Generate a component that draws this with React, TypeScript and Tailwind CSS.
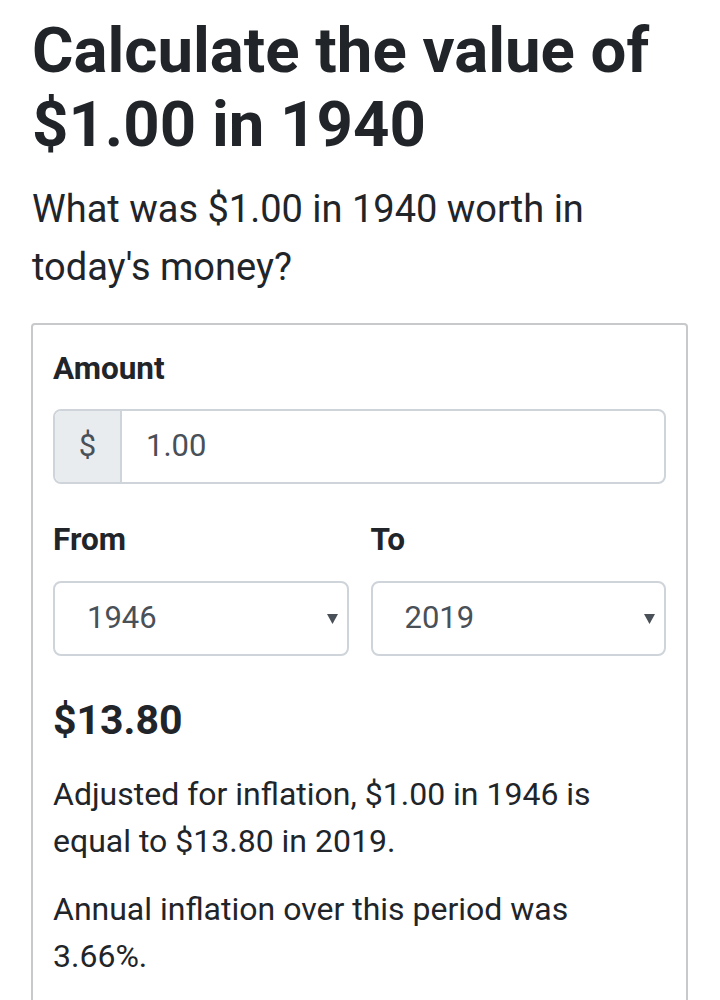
import React, { useState } from 'react';

const years = Array.from({ length: 2019 - 1913 + 1 }, (_, i) => 1913 + i);

function YearSelect({ value, onChange }: { value: number; onChange: (v: number) => void }) {
  return (
    <div className="relative flex-1">
      <select
        value={value}
        onChange={(e) => onChange(Number(e.target.value))}
        className="w-full h-[75px] appearance-none bg-white border-2 border-[#ced4da] rounded-[8px] pl-[32px] pr-10 text-[31px] text-[#495057] outline-none"
      >
        {years.map((y) => (
          <option key={y} value={y}>
            {y}
          </option>
        ))}
      </select>
      <svg
        className="pointer-events-none absolute right-[11px] top-[32px]"
        width="11"
        height="11"
        viewBox="0 0 10 10"
      >
        <path d="M0 1 L10 1 L5 10 Z" fill="#495057" />
      </svg>
    </div>
  );
}

export default function App() {
  const [amount, setAmount] = useState('1.00');
  const [from, setFrom] = useState(1946);
  const [to, setTo] = useState(2019);

  return (
    <div className="h-[1000px] bg-white text-[#212529] px-[32px] pt-[14px] overflow-hidden" style={{ fontFamily: 'Roboto, "Noto Sans", sans-serif' }}>
      <h1 className="text-[63.5px] leading-[74px] font-bold">
        Calculate the value of $1.00 in 1940
      </h1>
      <p className="mt-[18px] text-[38px] leading-[58px] pr-[80px]">
        What was $1.00 in 1940 worth in today's money?
      </p>

      {/* Calculator card */}
      <div className="mt-[27px] -ml-[1px] border-2 border-[#c8c9ca] rounded-[4px] px-[20px] pt-[26px] pb-[80px]">
        <label className="block text-[31.5px] leading-[36px] font-bold">Amount</label>
        <div className="mt-[22px] flex h-[75px] border-2 border-[#ced4da] rounded-[8px] overflow-hidden">
          <span className="w-[67px] flex items-center justify-center bg-[#e9ecef] border-r-2 border-[#ced4da] text-[31px] text-[#495057]">
            $
          </span>
          <input
            value={amount}
            onChange={(e) => setAmount(e.target.value)}
            className="flex-1 min-w-0 pl-[24px] text-[31px] text-[#495057] outline-none"
          />
        </div>

        <div className="mt-[38px] flex gap-[22px]">
          <div className="flex-1">
            <label className="block text-[31.5px] leading-[36px] font-bold">From</label>
            <div className="mt-[23px] flex">
              <YearSelect value={from} onChange={setFrom} />
            </div>
          </div>
          <div className="flex-1">
            <label className="block text-[31.5px] leading-[36px] font-bold">To</label>
            <div className="mt-[23px] flex">
              <YearSelect value={to} onChange={setTo} />
            </div>
          </div>
        </div>

        <div className="mt-[40px] text-[41px] leading-[48px] font-bold">$13.80</div>
        <p className="mt-[27px] text-[32px] leading-[47px]">
          Adjusted for inflation, $1.00 in 1946 is equal to $13.80 in 2019.
        </p>
        <p className="mt-[21px] text-[32px] leading-[47px]">
          Annual inflation over this period was 3.66%.
        </p>
      </div>
    </div>
  );
}
